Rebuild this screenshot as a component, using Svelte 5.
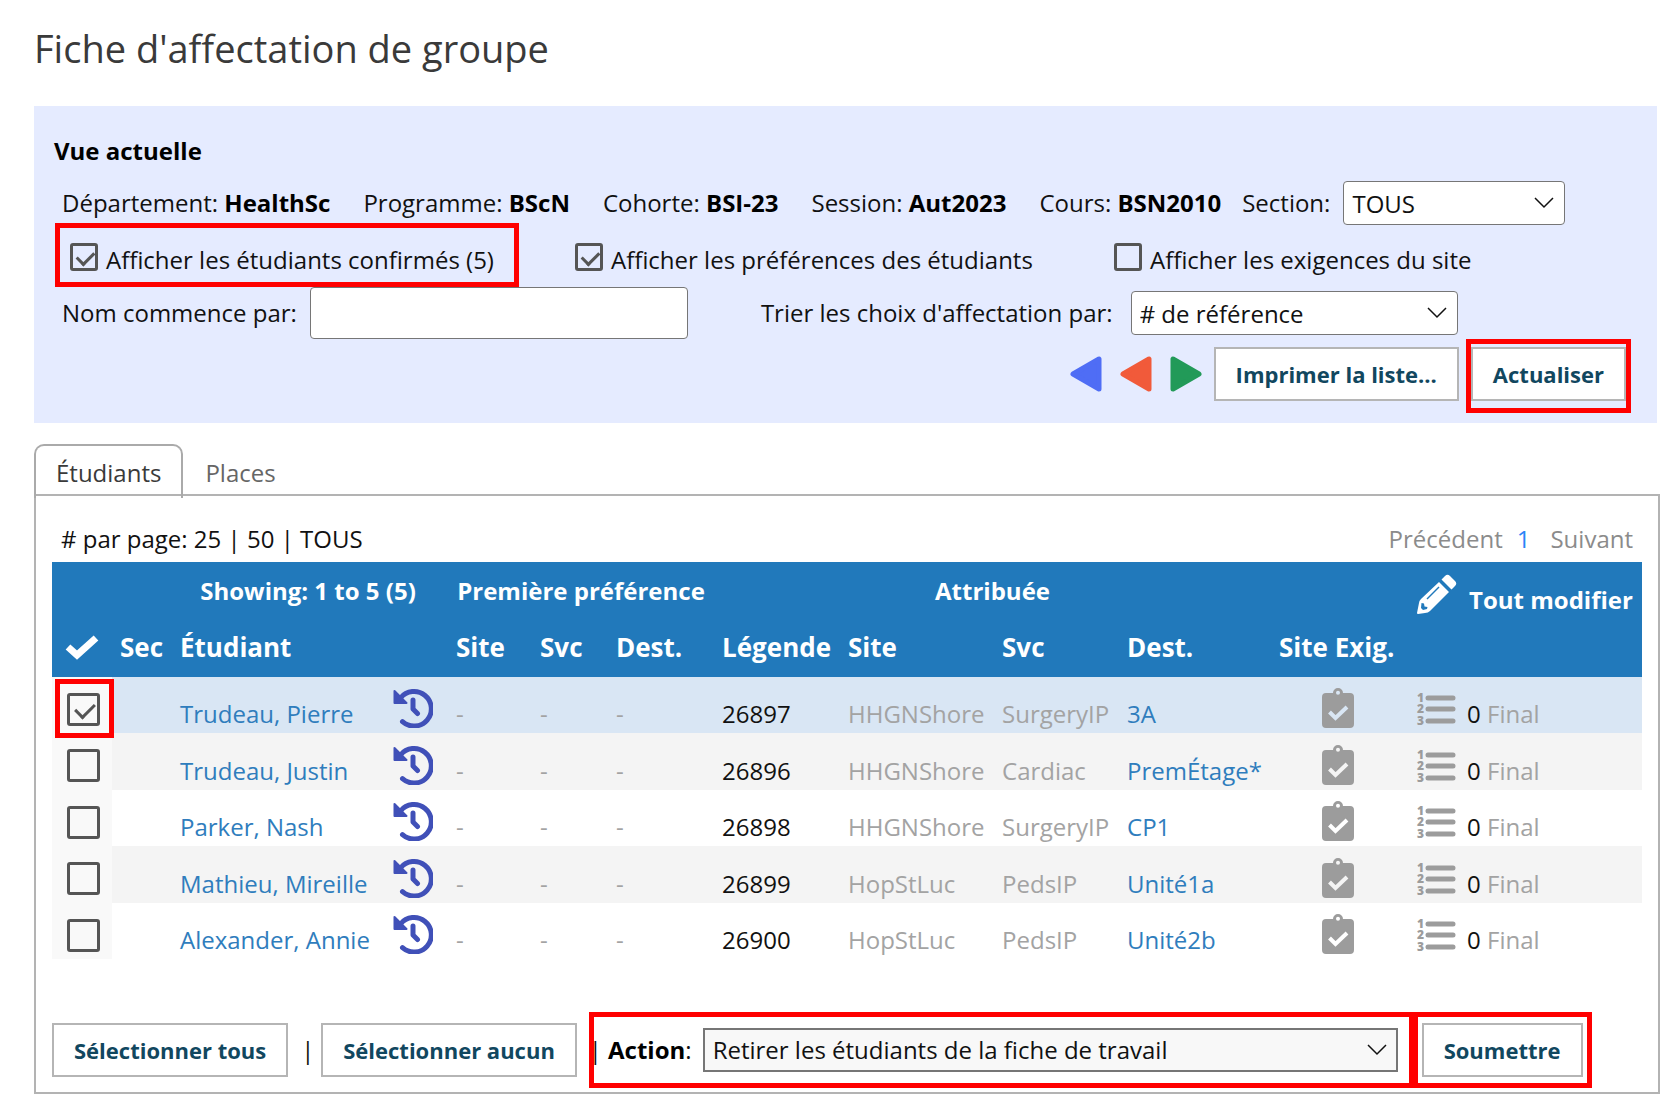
<script>
  let name = $state('');
  let section = $state('TOUS');
  let sort = $state('# de référence');
  let action = $state('Retirer les étudiants de la fiche de travail');

  const context = [
    ['Département', 'HealthSc'],
    ['Programme', 'BScN'],
    ['Cohorte', 'BSI-23'],
    ['Session', 'Aut2023'],
    ['Cours', 'BSN2010']
  ];

  let students = $state([
    { name: 'Trudeau, Pierre', ref: '26897', site: 'HHGNShore', svc: 'SurgeryIP', dest: '3A', selected: true },
    { name: 'Trudeau, Justin', ref: '26896', site: 'HHGNShore', svc: 'Cardiac', dest: 'PremÉtage*', selected: false },
    { name: 'Parker, Nash', ref: '26898', site: 'HHGNShore', svc: 'SurgeryIP', dest: 'CP1', selected: false },
    { name: 'Mathieu, Mireille', ref: '26899', site: 'HopStLuc', svc: 'PedsIP', dest: 'Unité1a', selected: false },
    { name: 'Alexander, Annie', ref: '26900', site: 'HopStLuc', svc: 'PedsIP', dest: 'Unité2b', selected: false }
  ]);

  function selectAll(value) {
    for (const s of students) s.selected = value;
  }
</script>

{#snippet chevron()}
  <svg class="chevron" viewBox="0 0 20 12" aria-hidden="true"><path d="M1 1l9 9 9-9" /></svg>
{/snippet}

<main>
  <h1>Fiche d'affectation de groupe</h1>

  <section class="filters">
    <h2>Vue actuelle</h2>
    <div class="line context">
      {#each context as [label, value]}
        <span>{label}: <b>{value}</b></span>
      {/each}
      <label class="section" for="section">Section:</label>
      <div class="pick w-section">
        <select id="section" bind:value={section}><option>TOUS</option></select>
        {@render chevron()}
      </div>
    </div>

    <div class="line checks">
      <label class="mark confirmed"><input type="checkbox" checked /><span>Afficher les étudiants confirmés (5)</span></label>
      <label><input type="checkbox" checked /><span>Afficher les préférences des étudiants</span></label>
      <label><input type="checkbox" /><span>Afficher les exigences du site</span></label>
    </div>

    <div class="line search">
      <label for="name">Nom commence par:</label>
      <input id="name" type="text" bind:value={name} />
      <label class="sort" for="sort">Trier les choix d'affectation par:</label>
      <div class="pick w-sort">
        <select id="sort" bind:value={sort}><option># de référence</option></select>
        {@render chevron()}
      </div>
    </div>

    <div class="line commands">
      <div class="line nav">
        <button class="arrow blue" aria-label="Premier"><svg viewBox="0 0 34 38"><path d="M30 4V34L4 19z" /></svg></button>
        <button class="arrow orange" aria-label="Précédent"><svg viewBox="0 0 34 38"><path d="M30 4V34L4 19z" /></svg></button>
        <button class="arrow green" aria-label="Suivant"><svg viewBox="0 0 34 38"><path d="M4 4V34L30 19z" /></svg></button>
        <button class="btn">Imprimer la liste...</button>
      </div>
      <div class="mark refresh"><button class="btn">Actualiser</button></div>
    </div>
  </section>

  <nav class="tabs">
    <a class="active" href="#etudiants">Étudiants</a>
    <a href="#places">Places</a>
  </nav>

  <section class="sheet">
    <div class="paging">
      <span># par page: 25 | 50 | TOUS</span>
      <span class="pages"><span>Précédent</span><a href="#page-1">1</a><span>Suivant</span></span>
    </div>

    <table>
      <colgroup>
        <col class="c-check" /><col class="c-sec" /><col class="c-name" /><col class="c-hist" />
        <col class="c-site" /><col class="c-svc" /><col class="c-dest" /><col class="c-ref" />
        <col class="c-asite" /><col class="c-asvc" /><col class="c-adest" /><col class="c-req" /><col />
      </colgroup>
      <thead>
        <tr>
          <th colspan="2"></th>
          <th colspan="2" class="mid showing">Showing: 1 to 5 (5)</th>
          <th colspan="3" class="mid">Première préférence</th>
          <th colspan="4" class="mid">Attribuée</th>
          <th></th>
          <th>
            <a class="edit" href="#modifier">
              <svg viewBox="0 0 40 40" aria-hidden="true">
                <path fill="#fff" d="M22 8 32 18 13 37Q11 39 8 39L1 40Q0 40 0 39L2 29Q2 27 4 25ZM24.500 5.500 28 2Q30.500-.5 33 2L38 7Q40.500 9.500 38 12L34.500 15.500Z" />
                <path fill="none" stroke="#2179bb" stroke-width="1.500" d="M10 25 22 13" />
                <path fill="#2179bb" d="M4.500 29 7 29.500 7.500 32.500 10.500 33 10 35 6 36 4 34Z" />
              </svg>
              <span>Tout modifier</span>
            </a>
          </th>
        </tr>
        <tr class="heads">
          <th><svg class="tick" viewBox="0 0 34 26" role="img" aria-label="Sélection"><path d="M3 13l9 8L31 4" /></svg></th>
          <th>Sec</th>
          <th colspan="2">Étudiant</th>
          <th>Site</th><th>Svc</th><th>Dest.</th><th>Légende</th>
          <th>Site</th><th>Svc</th><th>Dest.</th><th>Site Exig.</th><th></th>
        </tr>
      </thead>
      <tbody>
        {#each students as s, i}
          <tr class:chosen={s.selected}>
            <td class="check"><div class:ring={i === 0}><input type="checkbox" aria-label={s.name} bind:checked={s.selected} /></div></td>
            <td></td>
            <td><a href="#etudiant-{s.ref}">{s.name}</a></td>
            <td class="icon">
              <svg class="history" viewBox="0 0 40 40" aria-hidden="true">
                <path class="stroke" d="M7.500 10A17.300 17.300 0 1 1 9.500 33.700M20 12v9l4.500 4.500" />
                <path class="head" d="M1.500 3v12h12z" />
              </svg>
            </td>
            <td class="dim">-</td><td class="dim">-</td><td class="dim">-</td>
            <td>{s.ref}</td>
            <td class="dim">{s.site}</td>
            <td class="dim">{s.svc}</td>
            <td><a href="#place-{s.ref}">{s.dest}</a></td>
            <td class="icon req">
              <svg class="clip" viewBox="0 0 32 40" aria-hidden="true">
                <path fill="#9c9c9c" fill-rule="evenodd" d="M4 5h7a5 5 0 0 1 10 0h7q4 0 4 4v27q0 4-4 4H4q-4 0-4-4V9q0-4 4-4zM16 2.700a2 2 0 1 0 0 4 2 2 0 0 0 0-4z" />
                <path class="ok" d="M7.500 24l6 6L25 19" />
              </svg>
            </td>
            <td>
              <div class="rank">
                <svg viewBox="0 0 40 36" aria-hidden="true">
                  <text x="0" y="10">1</text><text x="0" y="21">2</text><text x="0" y="33">3</text>
                  <path d="M11 6h25M11 17h25M11 29h25" />
                </svg>
                <span>0 <i>Final</i></span>
              </div>
            </td>
          </tr>
        {/each}
      </tbody>
    </table>

    <div class="actions">
      <button class="btn" onclick={() => selectAll(true)}>Sélectionner tous</button>
      <span class="bar">|</span>
      <button class="btn" onclick={() => selectAll(false)}>Sélectionner aucun</button>
      <div class="mark action">
        <span>|</span>
        <label for="action"><b>Action</b>:</label>
        <div class="pick w-action">
          <select id="action" bind:value={action}><option>Retirer les étudiants de la fiche de travail</option></select>
          {@render chevron()}
        </div>
      </div>
      <div class="mark submit"><button class="btn">Soumettre</button></div>
    </div>
  </section>
</main>

<style>
  :global(body) { margin: 0; background: #fff; }
  * { box-sizing: border-box; }
  main {
    padding: 22px 20px 26px 34px;
    font: 24px/32px 'Open Sans', 'Noto Sans', sans-serif;
    color: #111;
  }
  h1 { margin: 0 0 32px; font-size: 38px; font-weight: 400; line-height: 52px; color: #3a3a3a; }
  h2 { margin: 0; padding: 0 20px; font-size: 24px; line-height: 32px; color: #000; }
  b { font-weight: 700; color: #000; }
  button, input, select { font: inherit; margin: 0; }
  a { color: #2f7dbd; text-decoration: none; }

  .filters { margin-right: 3px; padding: 29px 0 11px; background: #e5ebff; }
  .line { display: flex; align-items: center; white-space: nowrap; }
  .context { gap: 33px; height: 44px; margin-top: 14px; padding-left: 28px; }
  .section { margin-left: -12px; }
  .context .pick { margin-left: -20px; }
  .pick { position: relative; }
  .w-section { width: 222px; }
  .w-sort { width: 327px; margin-left: 18px; }
  .w-action { width: 695px; }
  select {
    display: block;
    appearance: none;
    width: 100%;
    height: 44px;
    padding: 2px 36px 0 8px;
    border: 1px solid #767676;
    border-radius: 4px;
    background: #fff;
    color: #111;
  }
  .chevron {
    position: absolute; right: 11px; top: 16px; width: 20px; height: 12px;
    fill: none; stroke: #111; stroke-width: 1.500; pointer-events: none;
  }

  input[type='checkbox'] {
    appearance: none;
    position: relative;
    flex: none;
    display: block;
    width: 28px;
    height: 28px;
    border: 3px solid #555;
    border-radius: 3px;
    background: transparent;
  }
  input[type='checkbox']:checked::before {
    content: '';
    position: absolute;
    left: 7px; top: 2px;
    width: 8px; height: 14px;
    border: solid #555;
    border-width: 0 3px 3px 0;
    transform: rotate(45deg);
  }
  .mark { outline: 5px solid #f00; outline-offset: -5px; }
  .checks { display: grid; grid-template-columns: 500px 539px auto; height: 64px; padding-left: 21px; margin-top: -2px; }
  .checks label { display: flex; align-items: center; gap: 8px; height: 64px; padding: 9px 0 0 20px; }
  .checks .confirmed { width: 464px; padding-left: 15px; }
  .checks input { margin-bottom: 6px; }

  .search { height: 52px; padding-left: 28px; }
  .search input { width: 378px; height: 52px; margin-left: 13px; padding: 0 8px; border: 1px solid #767676; border-radius: 4px; background: #fff; }
  .sort { margin-left: 73px; }

  .commands { height: 73px; justify-content: flex-end; padding-right: 26px; }
  .nav { padding-bottom: 4px; }
  .btn {
    height: 54px;
    padding: 0 20px;
    border: 2px solid #b5b5b5;
    background: #fff;
    color: #11475f;
    font-size: 22px;
    font-weight: 700;
    white-space: nowrap;
  }
  .arrow { width: 34px; height: 38px; margin-right: 16px; padding: 0; border: 0; background: none; stroke-width: 5; stroke-linejoin: round; }
  .arrow svg { display: block; width: 34px; height: 38px; }
  .arrow.green { margin-right: 11px; }
  .blue { fill: #4f6df5; stroke: #4f6df5; }
  .orange { fill: #f15a3a; stroke: #f15a3a; }
  .green { fill: #229a58; stroke: #229a58; }
  .refresh { margin-left: 7px; padding: 8px 5px 12px; }

  .tabs { display: flex; margin-top: 21px; height: 50px; }
  .tabs a { padding: 13px 22px; height: 50px; color: #666; }
  .tabs .active {
    height: 54px;
    border: solid #aaa;
    border-width: 2px 2px 0;
    border-radius: 10px 10px 0 0;
    padding: 11px 20px;
    color: #3a3a3a;
  }
  .sheet { border: 2px solid #b3b3b3; padding: 26px 16px 4px; }
  .paging { display: flex; justify-content: space-between; height: 40px; padding: 0 9px; line-height: 34px; }
  .pages { color: #8b8b8b; }
  .pages a { margin: 0 20px 0 14px; color: #2b83f6; }

  table { width: 100%; border-collapse: collapse; table-layout: fixed; white-space: nowrap; }
  .c-check { width: 60px; }
  .c-sec { width: 60px; }
  .c-name { width: 213px; }
  .c-hist { width: 63px; }
  .c-site { width: 84px; }
  .c-svc { width: 76px; }
  .c-dest { width: 106px; }
  .c-ref { width: 126px; }
  .c-asite { width: 154px; }
  .c-asvc { width: 125px; }
  .c-adest { width: 152px; }
  .c-req { width: 138px; }
  thead { background: #2179bb; color: #fff; }
  th { height: 57px; padding: 0 8px; text-align: left; font-weight: 700; }
  .heads { font-size: 26px; }
  .heads th { height: 58px; padding-bottom: 2px; }
  .mid { text-align: center; }
  .showing { padding-right: 12px; }
  .edit { display: flex; gap: 12px; padding-top: 8px; color: #fff; }
  .edit svg { flex: none; width: 40px; height: 40px; }
  .edit span { padding-top: 10px; }
  .tick { display: block; width: 34px; height: 26px; margin-left: 5px; fill: none; stroke: #fff; stroke-width: 7; }
  tbody tr { --bg: #fff; background: var(--bg); }
  tbody tr:nth-child(even) { --bg: #f4f4f4; }
  tbody tr.chosen { --bg: #d9e6f4; }
  td { height: 56px; padding: 18px 8px 0; line-height: 38px; }
  tr:nth-child(even) td { height: 57px; }
  td.check { padding: 0; background: #f9f9f9; }
  .check div { position: relative; display: grid; place-items: center; height: 56px; padding-top: 8px; margin-left: 3px; }
  .ring::after {
    content: '';
    position: absolute;
    inset: 2px -2px -5px 0;
    border: 5px solid #f00;
    pointer-events: none;
  }
  .check input[type='checkbox'] { width: 33px; height: 33px; }
  .check input[type='checkbox']:checked::before { left: 9px; top: 3px; width: 9px; height: 16px; }
  .dim, i { color: #a3a3a3; font-style: normal; }
  td.icon { padding-top: 6px; }
  .icon svg { display: block; height: 40px; }
  .history { width: 40px; }
  .stroke { fill: none; stroke: #4050b8; stroke-width: 5; stroke-linecap: round; stroke-linejoin: round; }
  .head { fill: #4050b8; stroke: #4050b8; stroke-width: 2; stroke-linejoin: round; }
  .clip { width: 32px; margin: 0 auto; }
  .req { padding-right: 12px; }
  .ok { fill: none; stroke: var(--bg); stroke-width: 4; }
  .rank { display: flex; gap: 10px; }
  .rank svg { flex: none; width: 40px; height: 36px; margin-top: -3px; overflow: visible; }
  .rank text { font: 800 12px/12px 'Open Sans', sans-serif; fill: #9c9c9c; }
  .rank path { stroke: #9c9c9c; stroke-width: 5; stroke-linecap: round; }

  .actions { display: flex; align-items: center; margin-top: 53px; white-space: nowrap; }
  .bar { width: 33px; padding-left: 6px; text-align: center; }
  .action { display: flex; align-items: center; height: 76px; margin-left: 12px; padding-right: 16px; }
  .action label { margin: 0 11px 0 6px; }
  .action select { border-radius: 0; border-width: 2px; background: #f8f8f8; padding-top: 0; }
  .submit { padding: 11px 9px; margin-left: -1px; }
</style>
